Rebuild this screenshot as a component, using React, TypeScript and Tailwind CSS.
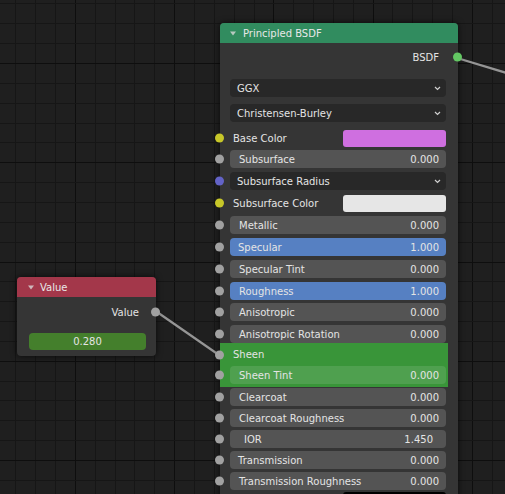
import React from "react";

const STEP = 19.85;
const X0 = 15.3;
const Y0 = 23.3;

function Grid() {
  const rects: React.ReactNode[] = [];
  for (let i = -1; i < 27; i++) {
    const x = Math.round(X0 + i * STEP);
    const major = (((i - 3) % 5) + 5) % 5 === 0;
    rects.push(
      <rect key={"v" + i} x={x} y={0} width={1} height={494} fill={major ? "#0e0e0e" : "#161616"} />
    );
  }
  for (let j = -2; j < 26; j++) {
    const y = Math.round(Y0 + j * STEP);
    const major = (((j - 2) % 5) + 5) % 5 === 0;
    rects.push(
      <rect key={"h" + j} x={0} y={y} width={505} height={1} fill={major ? "#0e0e0e" : "#161616"} />
    );
  }
  return (
    <svg className="absolute inset-0" width={505} height={494}>
      {rects}
    </svg>
  );
}

function Links() {
  return (
    <svg className="absolute inset-0" width={505} height={494}>
      <line x1={157} y1={312} x2={219} y2={355} stroke="#959595" strokeWidth={2.2} strokeLinecap="round" />
      <line x1={457} y1={58} x2={510} y2={74} stroke="#959595" strokeWidth={2.2} strokeLinecap="round" />
    </svg>
  );
}

function Tri() {
  return (
    <svg width="6" height="5" viewBox="0 0 6 5" className="shrink-0">
      <polygon points="0,0.5 6,0.5 3,4.5" fill="#d8d8d8" fillOpacity="0.8" />
    </svg>
  );
}

function Chevron() {
  return (
    <svg width="7" height="5" viewBox="0 0 7 5" className="shrink-0">
      <polyline points="1,1 3.5,3.5 6,1" fill="none" stroke="#d0d0d0" strokeWidth="1.2" />
    </svg>
  );
}

function Socket({ color, side = "left" }: { color: string; side?: "left" | "right" }) {
  return (
    <div
      className={
        "absolute top-1/2 -translate-y-1/2 w-[9px] h-[9px] rounded-full " +
        color +
        (side === "left" ? " left-[-5px]" : " right-[-4px]")
      }
    />
  );
}

function Row({
  mt = "",
  socket,
  children,
  pr = "pr-[12px]",
}: {
  mt?: string;
  socket?: string;
  children: React.ReactNode;
  pr?: string;
}) {
  return (
    <div className={"relative flex pl-[10px] " + pr + " " + mt}>
      {socket ? <Socket color={socket} /> : null}
      {children}
    </div>
  );
}

function NumField({
  label,
  value,
  bg = "bg-[#545454]",
  pad = "pl-[9px] pr-[7px]",
}: {
  label: string;
  value: string;
  bg?: string;
  pad?: string;
}) {
  return (
    <div className={"flex-1 h-[18px] rounded-[4px] flex items-center justify-between " + bg + " " + pad}>
      <span>{label}</span>
      <span>{value}</span>
    </div>
  );
}

function Dropdown({ label }: { label: string }) {
  return (
    <div className="flex-1 h-[18px] rounded-[4px] bg-[#282828] flex items-center justify-between pl-[7px] pr-[5px]">
      <span>{label}</span>
      <Chevron />
    </div>
  );
}

function ColorField({ label, swatch }: { label?: string; swatch: string }) {
  return (
    <div className="flex-1 h-[18px] flex items-center justify-between pl-[3px]">
      <span>{label}</span>
      <div className={"w-[103px] h-[17px] rounded-[3px] " + swatch} />
    </div>
  );
}

const GRAY = "bg-[#a1a1a1]";
const YELLOW = "bg-[#c7c729]";
const PURPLE = "bg-[#6363c7]";
const GREEN = "bg-[#63c763]";

function PrincipledNode() {
  return (
    <div className="absolute left-[220px] top-[23px] w-[238px] h-[500px] rounded-[4px] bg-[#353535] shadow-[0_0_6px_rgba(0,0,0,0.7)]">
      <div className="h-[20px] rounded-t-[4px] bg-[#318c5f] flex items-center pl-[10px]">
        <Tri />
        <span className="ml-[7px] text-[#e8e8e8]">Principled BSDF</span>
      </div>
      <div className="flex flex-col pt-[4px]">
        <div className="relative h-[20px] flex items-center justify-end pr-[19px]">
          <span>BSDF</span>
          <Socket color={GREEN} side="right" />
        </div>
        <Row mt="mt-[12px]">
          <Dropdown label="GGX" />
        </Row>
        <Row mt="mt-[7px]">
          <Dropdown label="Christensen-Burley" />
        </Row>
        <Row mt="mt-[7px]" socket={YELLOW}>
          <ColorField label="Base Color" swatch="bg-[#cf6fe0]" />
        </Row>
        <Row mt="mt-[3px]" socket={GRAY}>
          <NumField label="Subsurface" value="0.000" />
        </Row>
        <Row mt="mt-[4px]" socket={PURPLE}>
          <Dropdown label="Subsurface Radius" />
        </Row>
        <Row mt="mt-[4px]" socket={YELLOW}>
          <ColorField label="Subsurface Color" swatch="bg-[#e6e6e6]" />
        </Row>
        <Row mt="mt-[4px]" socket={GRAY}>
          <NumField label="Metallic" value="0.000" />
        </Row>
        <Row mt="mt-[4px]" socket={GRAY}>
          <NumField label="Specular" value="1.000" bg="bg-[#5680c2]" pad="pl-[8px] pr-[7px]" />
        </Row>
        <Row mt="mt-[4px]" socket={GRAY}>
          <NumField label="Specular Tint" value="0.000" />
        </Row>
        <Row mt="mt-[4px]" socket={GRAY}>
          <NumField label="Roughness" value="1.000" bg="bg-[#5680c2]" />
        </Row>
        <Row mt="mt-[3px]" socket={GRAY}>
          <NumField label="Anisotropic" value="0.000" />
        </Row>
        <Row mt="mt-[4px]" socket={GRAY}>
          <NumField label="Anisotropic Rotation" value="0.000" />
        </Row>
        <div className="w-[228px] h-[44px] bg-[#399539] flex flex-col">
          <div className="relative h-[23px] flex items-center pl-[13px]">
            <Socket color={GRAY} />
            <span>Sheen</span>
          </div>
          <Row socket={GRAY} pr="pr-[2px]">
            <NumField label="Sheen Tint" value="0.000" bg="bg-[#4fa04f]" />
          </Row>
        </div>
        <Row mt="mt-[1px]" socket={GRAY}>
          <NumField label="Clearcoat" value="0.000" />
        </Row>
        <Row mt="mt-[3px]" socket={GRAY}>
          <NumField label="Clearcoat Roughness" value="0.000" />
        </Row>
        <Row mt="mt-[3px]" socket={GRAY}>
          <NumField label="IOR" value="1.450" pad="pl-[14px] pr-[13px]" />
        </Row>
        <Row mt="mt-[3px]" socket={GRAY}>
          <NumField label="Transmission" value="0.000" pad="pl-[8px] pr-[7px]" />
        </Row>
        <Row mt="mt-[3px]" socket={GRAY}>
          <NumField label="Transmission Roughness" value="0.000" />
        </Row>
        <Row mt="mt-[1px]" socket={YELLOW}>
          <ColorField swatch="bg-[#000000]" />
        </Row>
      </div>
    </div>
  );
}

function ValueNode() {
  return (
    <div className="absolute left-[17px] top-[277px] w-[139px] rounded-[4px] bg-[#353535] shadow-[0_0_6px_rgba(0,0,0,0.7)]">
      <div className="h-[20px] rounded-t-[4px] bg-[#a3374a] flex items-center pl-[11px]">
        <Tri />
        <span className="ml-[6px] text-[#e8e8e8]">Value</span>
      </div>
      <div className="flex flex-col pt-[5px] pb-[6px]">
        <div className="relative h-[20px] flex items-center justify-end pr-[17px]">
          <span>Value</span>
          <Socket color={GRAY} side="right" />
        </div>
        <div className="mt-[11px] ml-[12px] mr-[10px] h-[17px] rounded-[4px] bg-[#447f2c] flex items-center justify-center">
          0.280
        </div>
      </div>
    </div>
  );
}

export default function App() {
  return (
    <div className="relative w-[505px] h-[494px] overflow-hidden bg-[#1f1f1f] font-['DejaVu_Sans',sans-serif] text-[10px] text-[#e4e4e4]">
      <Grid />
      <Links />
      <ValueNode />
      <PrincipledNode />
    </div>
  );
}
